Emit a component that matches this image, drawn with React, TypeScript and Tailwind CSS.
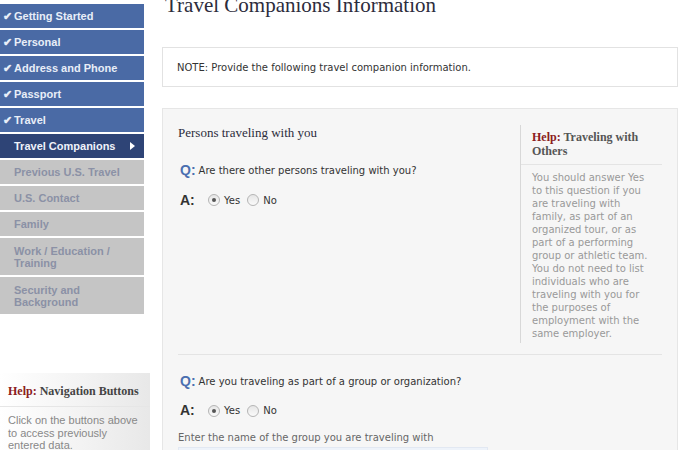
import React from 'react'

const done = ['Getting Started', 'Personal', 'Address and Phone', 'Passport', 'Travel']
const todo = [
  { label: 'Previous U.S. Travel', tall: false },
  { label: 'U.S. Contact', tall: false },
  { label: 'Family', tall: false },
  { label: 'Work / Education / Training', tall: true },
  { label: 'Security and Background', tall: true },
]

const Radio = ({ checked }: { checked?: boolean }) => (
  <span className="inline-flex h-[12px] w-[12px] items-center justify-center rounded-full border border-[#b5b5b5] bg-gradient-to-b from-[#e6e6e6] to-[#fafafa]">
    {checked && <span className="h-[4px] w-[4px] rounded-full bg-[#555]" />}
  </span>
)

const YesNo = () => (
  <div className="flex items-center gap-[10px]">
    <span className="w-[18px] font-['Liberation_Sans',sans-serif] text-[14px] font-bold text-[#333]">A:</span>
    <div className="flex items-center gap-[4px] font-['DejaVu_Sans',sans-serif] text-[10px] text-[#333]">
      <Radio checked />
      <span className="mr-[3px]">Yes</span>
      <Radio />
      <span>No</span>
    </div>
  </div>
)

const Question = ({ text }: { text: string }) => (
  <div className="flex items-center gap-[3px]">
    <span className="font-['Liberation_Sans',sans-serif] text-[14px] font-bold text-[#4a6fb0]">Q:</span>
    <span className="font-['DejaVu_Sans',sans-serif] text-[10px] text-[#333]">{text}</span>
  </div>
)

export default function App() {
  return (
    <div className="flex h-[450px] w-[700px] overflow-hidden bg-white">
      {/* Sidebar */}
      <div className="flex w-[150px] shrink-0 flex-col">
        <div className="flex w-[144px] flex-col gap-[2px] pt-[4px] font-['Liberation_Sans',sans-serif] text-[11px] font-bold">
          {done.map((d) => (
            <div key={d} className="flex h-[24px] items-center bg-[#4a6aa5] pl-[3px] text-[#e8eef8]">
              <span className="w-[11px] text-[11px]">✔</span>
              <span>{d}</span>
            </div>
          ))}
          <div className="flex h-[24px] items-center justify-between bg-[#2e4476] pl-[14px] pr-[9px] text-[#eef2fa]">
            <span>Travel Companions</span>
            <svg width="5" height="8" viewBox="0 0 5 8">
              <path d="M0 0 L5 4 L0 8 Z" fill="#fff" />
            </svg>
          </div>
          {todo.map((t) => (
            <div
              key={t.label}
              className={`flex items-center bg-[#c5c5c5] pl-[14px] pr-[8px] leading-[12px] text-[#8b91a6] ${t.tall ? 'h-[37px]' : 'h-[24px]'}`}
            >
              <span>{t.label}</span>
            </div>
          ))}
        </div>

        <div className="mt-[59px] flex flex-1 flex-col bg-gradient-to-r from-white via-[#f4f4f4] to-[#e8e8e8]">
          <div className="border-b border-[#e6e6e6] px-[8px] pb-[6px] pt-[9px] font-['Liberation_Serif',serif] text-[12px] font-bold">
            <span className="text-[#8b2020]">Help:</span> <span className="text-[#444]">Navigation Buttons</span>
          </div>
          <div className="px-[8px] pt-[7px] font-['Liberation_Sans',sans-serif] text-[11px] leading-[12.5px] text-[#888]">
            Click on the buttons above to access previously entered data.
          </div>
        </div>
      </div>

      {/* Main */}
      <div className="flex w-[528px] flex-col pl-[12px]">
        <h1 className="-mt-[7px] shrink-0 pl-[3px] font-['Liberation_Serif',serif] text-[21px] leading-[24px] text-[#2c2c3c]">
          Travel Companions Information
        </h1>

        <div className="mt-[30px] flex h-[40px] shrink-0 items-center border border-[#e2e2e2] bg-white pl-[14px] font-['DejaVu_Sans',sans-serif] text-[10px] text-[#333]">
          NOTE: Provide the following travel companion information.
        </div>

        <div className="mt-[21px] flex-1 border border-[#e6e6e6] bg-[#f6f6f6] px-[15px] pt-[14px]">
          <div className="flex">
            <div className="flex-1">
              <div className="font-['Liberation_Serif',serif] text-[13px] text-[#2c2c3c]">Persons traveling with you</div>
              <div className="mt-[17px] pl-[2px]">
                <Question text="Are there other persons traveling with you?" />
              </div>
              <div className="mt-[9px] pl-[2px]">
                <YesNo />
              </div>
            </div>
            <div className="mt-[2px] w-[142px] border-l border-[#d8d8d8]">
              <div className="border-b border-[#e4e4e4] px-[11px] pb-[6px] pt-[5px] font-['Liberation_Serif',serif] text-[12px] font-bold leading-[14px]">
                <span className="text-[#8b2020]">Help:</span> <span className="text-[#555]">Traveling with Others</span>
              </div>
              <div className="px-[11px] pb-[3px] pt-[6px] font-['DejaVu_Sans',sans-serif] text-[10px] leading-[13px] text-[#999]">
                You should answer Yes to this question if you are traveling with family, as part of an organized tour, or as
                part of a performing group or athletic team. You do not need to list individuals who are traveling with you
                for the purposes of employment with the same employer.
              </div>
            </div>
          </div>

          <div className="mt-[11px] border-t border-[#e4e4e4] pt-[16px]">
            <div className="pl-[2px]">
              <Question text="Are you traveling as part of a group or organization?" />
            </div>
            <div className="mt-[8px] pl-[2px]">
              <YesNo />
            </div>
            <div className="mt-[9px] font-['DejaVu_Sans',sans-serif] text-[10px] text-[#666]">
              Enter the name of the group you are traveling with
            </div>
            <div className="mt-[2px] h-[20px] w-[310px] border border-[#e2e8f2] bg-[#eef3fa]" />
          </div>
        </div>
      </div>
    </div>
  )
}
